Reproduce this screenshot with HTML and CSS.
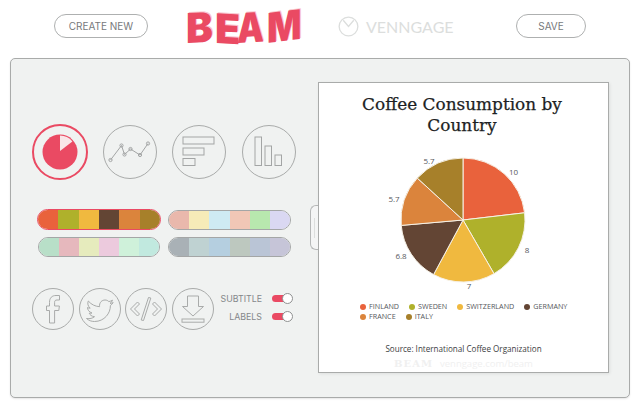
FILE: index.html
```html
<!DOCTYPE html>
<html lang="en">
<head>
  <meta charset="UTF-8" />
  <meta name="viewport" content="width=device-width, initial-scale=1.0"/>
  <title>Beam - Chart Maker</title>
  <link rel="stylesheet" href="styles.css">
</head>
<body>

<!-- Top bar -->
<div class="topbar">
  <button class="btn btn-create">CREATE NEW</button>
  <div class="logo">
    <span class="logo-b">B</span><span class="logo-e">E</span><span class="logo-a">A</span><span class="logo-m">M</span>
  </div>
  <div class="venngage">
    <svg class="venngage-icon" viewBox="0 0 22 22" width="21" height="21">
      <circle cx="11" cy="11" r="9.8"/>
      <path d="M5.5 4.5 L11 11 L16.5 4.5"/>
    </svg>
    <span>VENNGAGE</span>
  </div>
  <button class="btn btn-save">SAVE</button>
</div>

<!-- Editor panel -->
<div class="panel">
  <div class="controls">

    <div class="chart-types">
      <div class="type-btn active">
        <svg viewBox="0 0 56 56" width="56" height="56">
          <circle cx="28" cy="28" r="17.5" fill="#ea4a63"/>
          <path d="M28 27 V11.6 A16.4 16.4 0 0 1 40.4 17.4 Z" fill="#f9e6e8"/>
        </svg>
      </div>
      <div class="type-btn">
        <svg viewBox="0 0 54 54" width="54" height="54">
          <polyline points="7.5,35 18.5,20.5 21.5,29.5 27.5,24 37,30 45,18.5"/>
          <circle cx="7.5" cy="35" r="1.6"/><circle cx="18.5" cy="20.5" r="1.6"/>
          <circle cx="21.5" cy="29.5" r="1.6"/><circle cx="27.5" cy="24" r="1.6"/>
          <circle cx="37" cy="30" r="1.6"/><circle cx="45" cy="18.5" r="1.6"/>
        </svg>
      </div>
      <div class="type-btn">
        <svg viewBox="0 0 54 54" width="54" height="54">
          <rect x="11" y="12" width="31" height="7"/>
          <rect x="11" y="23" width="21" height="7"/>
          <rect x="11" y="33.5" width="12" height="7"/>
        </svg>
      </div>
      <div class="type-btn">
        <svg viewBox="0 0 54 54" width="54" height="54">
          <rect x="13" y="12" width="6.5" height="28.5"/>
          <rect x="23" y="21" width="6.5" height="19.5"/>
          <rect x="33" y="30" width="6.5" height="10.5"/>
        </svg>
      </div>
    </div>

    <div class="palettes">
      <div class="palette selected">
        <i style="background:#e9623c"></i><i style="background:#afb12b"></i><i style="background:#f0b93f"></i><i style="background:#634534"></i><i style="background:#db843c"></i><i style="background:#a7802a"></i>
      </div>
      <div class="palette">
        <i style="background:#e9b8ac"></i><i style="background:#f6ebb8"></i><i style="background:#ceeaf3"></i><i style="background:#f1c7b6"></i><i style="background:#b8e8ae"></i><i style="background:#dad8f2"></i>
      </div>
      <div class="palette narrow">
        <i style="background:#b8dfc8"></i><i style="background:#e6b8bd"></i><i style="background:#e6ebbd"></i><i style="background:#eccadd"></i><i style="background:#cff1da"></i><i style="background:#c1e9df"></i>
      </div>
      <div class="palette">
        <i style="background:#a9b1b6"></i><i style="background:#bfd2d2"></i><i style="background:#b5cfe0"></i><i style="background:#bdc8bf"></i><i style="background:#bac5d6"></i><i style="background:#c6c5d8"></i>
      </div>
    </div>

    <div class="actions">
      <div class="share-btn">
        <svg viewBox="0 0 42 42" width="42" height="42">
          <path d="M17.5 35 V22.5 H14.5 V18 H17.5 V14.5 C17.5 9.8 20 7.5 24 7.5 H27.5 V12 H25 C23.4 12 22.6 12.7 22.6 14.3 V18 H27.4 L26.8 22.5 H22.6 V35 Z"/>
        </svg>
      </div>
      <div class="share-btn">
        <svg viewBox="0 0 42 42" width="42" height="42">
          <path d="M7.5 30.5 C11 31 13.5 30.3 15.5 28.7 C12.5 28.3 11 27 10.2 25.2 C11.2 25.3 12.2 25.3 13 25 C10 24 8.5 21.8 8.5 19.5 C9.4 20 10.3 20.2 11.2 20.2 C9 18.3 8.2 15.5 9.3 13 C12.5 16.7 16 18.3 20.6 18.7 C20 14.5 23 12 26 12 C27.7 12 29 12.7 29.8 13.6 C31.2 13.3 32.3 12.9 33.5 12.2 C33 13.6 32.2 14.7 31 15.4 C32.2 15.3 33.2 15 34.2 14.6 C33.4 15.8 32.4 16.8 31.4 17.5 C31.6 25 25.5 33.5 15.5 33.5 C12.5 33.5 9.8 32.5 7.5 30.5 Z"/>
        </svg>
      </div>
      <div class="share-btn">
        <svg viewBox="0 0 42 42" width="42" height="42">
          <path d="M12.5 14 L5.5 21 L12.5 28 L14.5 26 L9.5 21 L14.5 16 Z"/>
          <path d="M29.5 14 L36.5 21 L29.5 28 L27.5 26 L32.5 21 L27.5 16 Z"/>
          <path d="M23.5 9.5 L25.8 10 L18.5 32.5 L16.2 32 Z"/>
        </svg>
      </div>
      <div class="share-btn">
        <svg viewBox="0 0 42 42" width="42" height="42">
          <path d="M15.5 8 H26.5 V18.5 H31.5 L21 28 L10.5 18.5 H15.5 Z"/>
          <rect x="10" y="31" width="22" height="3.2"/>
        </svg>
      </div>
      <div class="toggles">
        <div class="toggle-row"><span>SUBTITLE</span><div class="toggle"></div></div>
        <div class="toggle-row"><span>LABELS</span><div class="toggle"></div></div>
      </div>
    </div>
  </div>

  <div class="handle"></div>

  <!-- Chart preview -->
  <div class="card">
    <h1 class="chart-title">Coffee Consumption by Country</h1>
    <svg class="pie" viewBox="-100 -70 200 140" width="200" height="140">
      <g class="slices">
        <path fill="#e9623c" d="M0 0 V-62 A62 62 0 0 1 61.58 -7.2 Z"/>
        <path fill="#afb12b" d="M0 0 L61.58 -7.2 A62 62 0 0 1 31 53.69 Z"/>
        <path fill="#f0b93f" d="M0 0 L31 53.69 A62 62 0 0 1 -29.43 54.57 Z"/>
        <path fill="#634534" d="M0 0 L-29.43 54.57 A62 62 0 0 1 -61.76 5.4 Z"/>
        <path fill="#db843c" d="M0 0 L-61.76 5.4 A62 62 0 0 1 -45.71 -41.89 Z"/>
        <path fill="#a7802a" d="M0 0 L-45.71 -41.89 A62 62 0 0 1 0 -62 Z"/>
      </g>
      <g class="pie-labels">
        <text x="50.5" y="-45.5">10</text>
        <text x="64" y="33">8</text>
        <text x="6" y="69">7</text>
        <text x="-62" y="39">6.8</text>
        <text x="-69" y="-18">5.7</text>
        <text x="-34" y="-56.5">5.7</text>
      </g>
    </svg>
    <div class="legend">
      <span class="legend-item"><b style="background:#e9623c"></b>FINLAND</span>
      <span class="legend-item"><b style="background:#afb12b"></b>SWEDEN</span>
      <span class="legend-item"><b style="background:#f0b93f"></b>SWITZERLAND</span>
      <span class="legend-item"><b style="background:#634534"></b>GERMANY</span>
      <span class="legend-item"><b style="background:#db843c"></b>FRANCE</span>
      <span class="legend-item"><b style="background:#a7802a"></b>ITALY</span>
    </div>
    <p class="source">Source: International Coffee Organization</p>
    <p class="watermark"><strong>BEAM</strong><span>venngage.com/beam</span></p>
  </div>
</div>

</body>
</html>
```

FILE: styles.css
```css
body {
  font-family: Inter, "Open Sans", sans-serif;
  background: white;
  margin: 0;
  padding: 0;
  height: 402px;
  overflow: hidden;
}

/* top bar */
.topbar {
  height: 58px;
  display: flex;
  align-items: flex-start;
  box-sizing: border-box;
  padding-top: 14px;
}
.btn {
  height: 24px;
  background: white;
  border: 1px solid #aeb0b0;
  border-radius: 12px;
  color: #77797c;
  font-family: inherit;
  font-size: 10px;
  padding: 0;
}
.btn-create {
  width: 94px;
  margin-left: 54px;
}
.btn-save {
  width: 70px;
  margin-left: 64px;
}
.logo {
  width: 116px;
  flex-shrink: 0;
  margin-left: 38px;
  margin-top: -9px;
  display: flex;
  font-family: Inter, sans-serif;
  font-weight: 900;
  font-size: 41px;
  line-height: 46px;
  color: #ea4a63;
}
.logo span {
  display: block;
  transform-origin: left;
  text-shadow: 1px -1px 0 #f9c6cf;
}
.logo-b { width: 29px; transform: skewY(-3deg) scaleX(.98); }
.logo-e { width: 22px; transform: skewY(3deg) scaleX(1); }
.logo-a { width: 30px; transform: skewY(-3deg) scaleX(.83); }
.logo-m { width: 35px; transform: skewY(-7deg) scaleX(.88); }
.venngage {
  display: flex;
  align-items: center;
  gap: 7px;
  margin-left: 36px;
  height: 24px;
  width: 114px;
  color: #dcdedd;
  font-family: Lato, sans-serif;
  font-size: 16px;
}
.venngage-icon {
  flex-shrink: 0;
  fill: none;
  stroke: #dcdedd;
  stroke-width: 1.4;
}

/* main panel */
.panel {
  position: relative;
  margin-left: 10px;
  width: 620px;
  height: 340px;
  box-sizing: border-box;
  background: #f0f2f1;
  border: 1px solid #a9abaa;
  border-radius: 5px;
  box-shadow: 0 1px 2px rgba(0,0,0,0.1);
  display: flex;
  padding: 23px 20px 0 0;
}
.controls {
  width: 307px;
  flex-shrink: 0;
  box-sizing: border-box;
  padding: 42px 0 0 21px;
}
.chart-types {
  display: flex;
  align-items: center;
  gap: 15.5px;
}
.type-btn {
  width: 54px;
  height: 54px;
  border-radius: 50%;
  border: 1px solid #a9abaa;
  box-sizing: border-box;
  flex-shrink: 0;
}
.type-btn svg {
  display: block;
  margin: -1px;
  fill: none;
  stroke: #a3a5a5;
  stroke-width: 1;
}
.type-btn.active {
  width: 56px;
  height: 56px;
  border: 2px solid #ea4a63;
  margin-right: -1px;
}
.type-btn.active svg {
  margin: -2px;
  stroke: none;
}

.palettes {
  display: grid;
  grid-template-columns: 124px 123px;
  column-gap: 7px;
  row-gap: 7px;
  margin-top: 29px;
  margin-left: 5px;
  align-items: center;
}
.palette {
  height: 20px;
  box-sizing: border-box;
  border: 1px solid #a4a6a6;
  border-radius: 10px;
  overflow: hidden;
  display: flex;
}
.palette i {
  flex: 1;
}
.palette.narrow {
  margin: 0 1px;
}
.palette.selected {
  height: 21px;
  border: 1.5px solid #ea4a63;
  border-radius: 11px;
}

.actions {
  display: flex;
  align-items: center;
  gap: 4.5px;
  margin-top: 31px;
}
.share-btn {
  width: 42px;
  height: 42px;
  box-sizing: border-box;
  border: 1px solid #a9abaa;
  border-radius: 50%;
  flex-shrink: 0;
}
.share-btn svg {
  display: block;
  margin: -1px;
  fill: none;
  stroke: #a9abaa;
  stroke-width: 1;
}
.toggles {
  margin-left: 2px;
  margin-bottom: 4px;
  display: flex;
  flex-direction: column;
  gap: 6px;
  align-items: flex-end;
  width: 72px;
}
.toggle-row {
  display: flex;
  align-items: center;
  gap: 10px;
  font-size: 8.8px;
  color: #85888a;
  height: 12px;
}
.toggle {
  position: relative;
  width: 20px;
  height: 7px;
  border-radius: 4px;
  background: #ea4a63;
}
.toggle:after {
  content: "";
  position: absolute;
  right: -1px;
  top: -2px;
  width: 9px;
  height: 9px;
  border: 1px solid #8f9191;
  border-radius: 50%;
  background: white;
}

/* little tab that sticks out beside the chart */
.handle {
  position: absolute;
  left: 299px;
  top: 146px;
  width: 8px;
  height: 45px;
  box-sizing: border-box;
  border: 1px solid #b5b7b7;
  border-right: none;
  border-radius: 6px 0 0 6px;
  background: #f4f5f5;
}
.handle:after {
  content: "";
  position: absolute;
  left: 3px;
  top: 12px;
  width: 1px;
  height: 20px;
  background: #dcdedd;
}

/* chart card */
.card {
  width: 291px;
  height: 291px;
  box-sizing: border-box;
  background: white;
  border: 1px solid #a9abaa;
  box-shadow: 1px 1px 3px rgba(0,0,0,0.08);
  text-align: center;
  flex-shrink: 0;
}
.chart-title {
  margin: 11px 32px 0 29px;
  font-family: "DejaVu Serif", serif;
  font-weight: normal;
  font-size: 16.9px;
  line-height: 21px;
  color: #1d1f24;
  -webkit-text-stroke: 0.25px #1d1f24;
}
.pie {
  display: block;
  margin: 14px 0 0 44px;
}
.slices path {
  stroke: #f6f1e6;
  stroke-width: 1;
}
.pie-labels text {
  font-family: "Open Sans", sans-serif;
  font-size: 8px;
  fill: #55585c;
  text-anchor: middle;
}
.legend {
  display: flex;
  flex-wrap: wrap;
  column-gap: 10px;
  row-gap: 1px;
  margin: 12px 20px 0 41px;
  font-family: "Open Sans", sans-serif;
  font-size: 7.2px;
  line-height: 9px;
  color: #55585c;
}
.legend-item {
  display: flex;
  align-items: center;
  gap: 3px;
}
.legend-item b {
  width: 6px;
  height: 6px;
  border-radius: 50%;
}
.source {
  margin: 22px 0 0;
  font-family: "Open Sans", sans-serif;
  font-size: 8.1px;
  line-height: 12px;
  color: #3c3e42;
}
.watermark {
  margin: 3px 0 0;
  font-family: "Open Sans", sans-serif;
  font-size: 9.5px;
  line-height: 11px;
  color: #f0f0f0;
  display: flex;
  justify-content: center;
  gap: 7px;
}
.watermark strong {
  font-family: "DejaVu Serif", serif;
  font-size: 10px;
  letter-spacing: 1px;
}
```
